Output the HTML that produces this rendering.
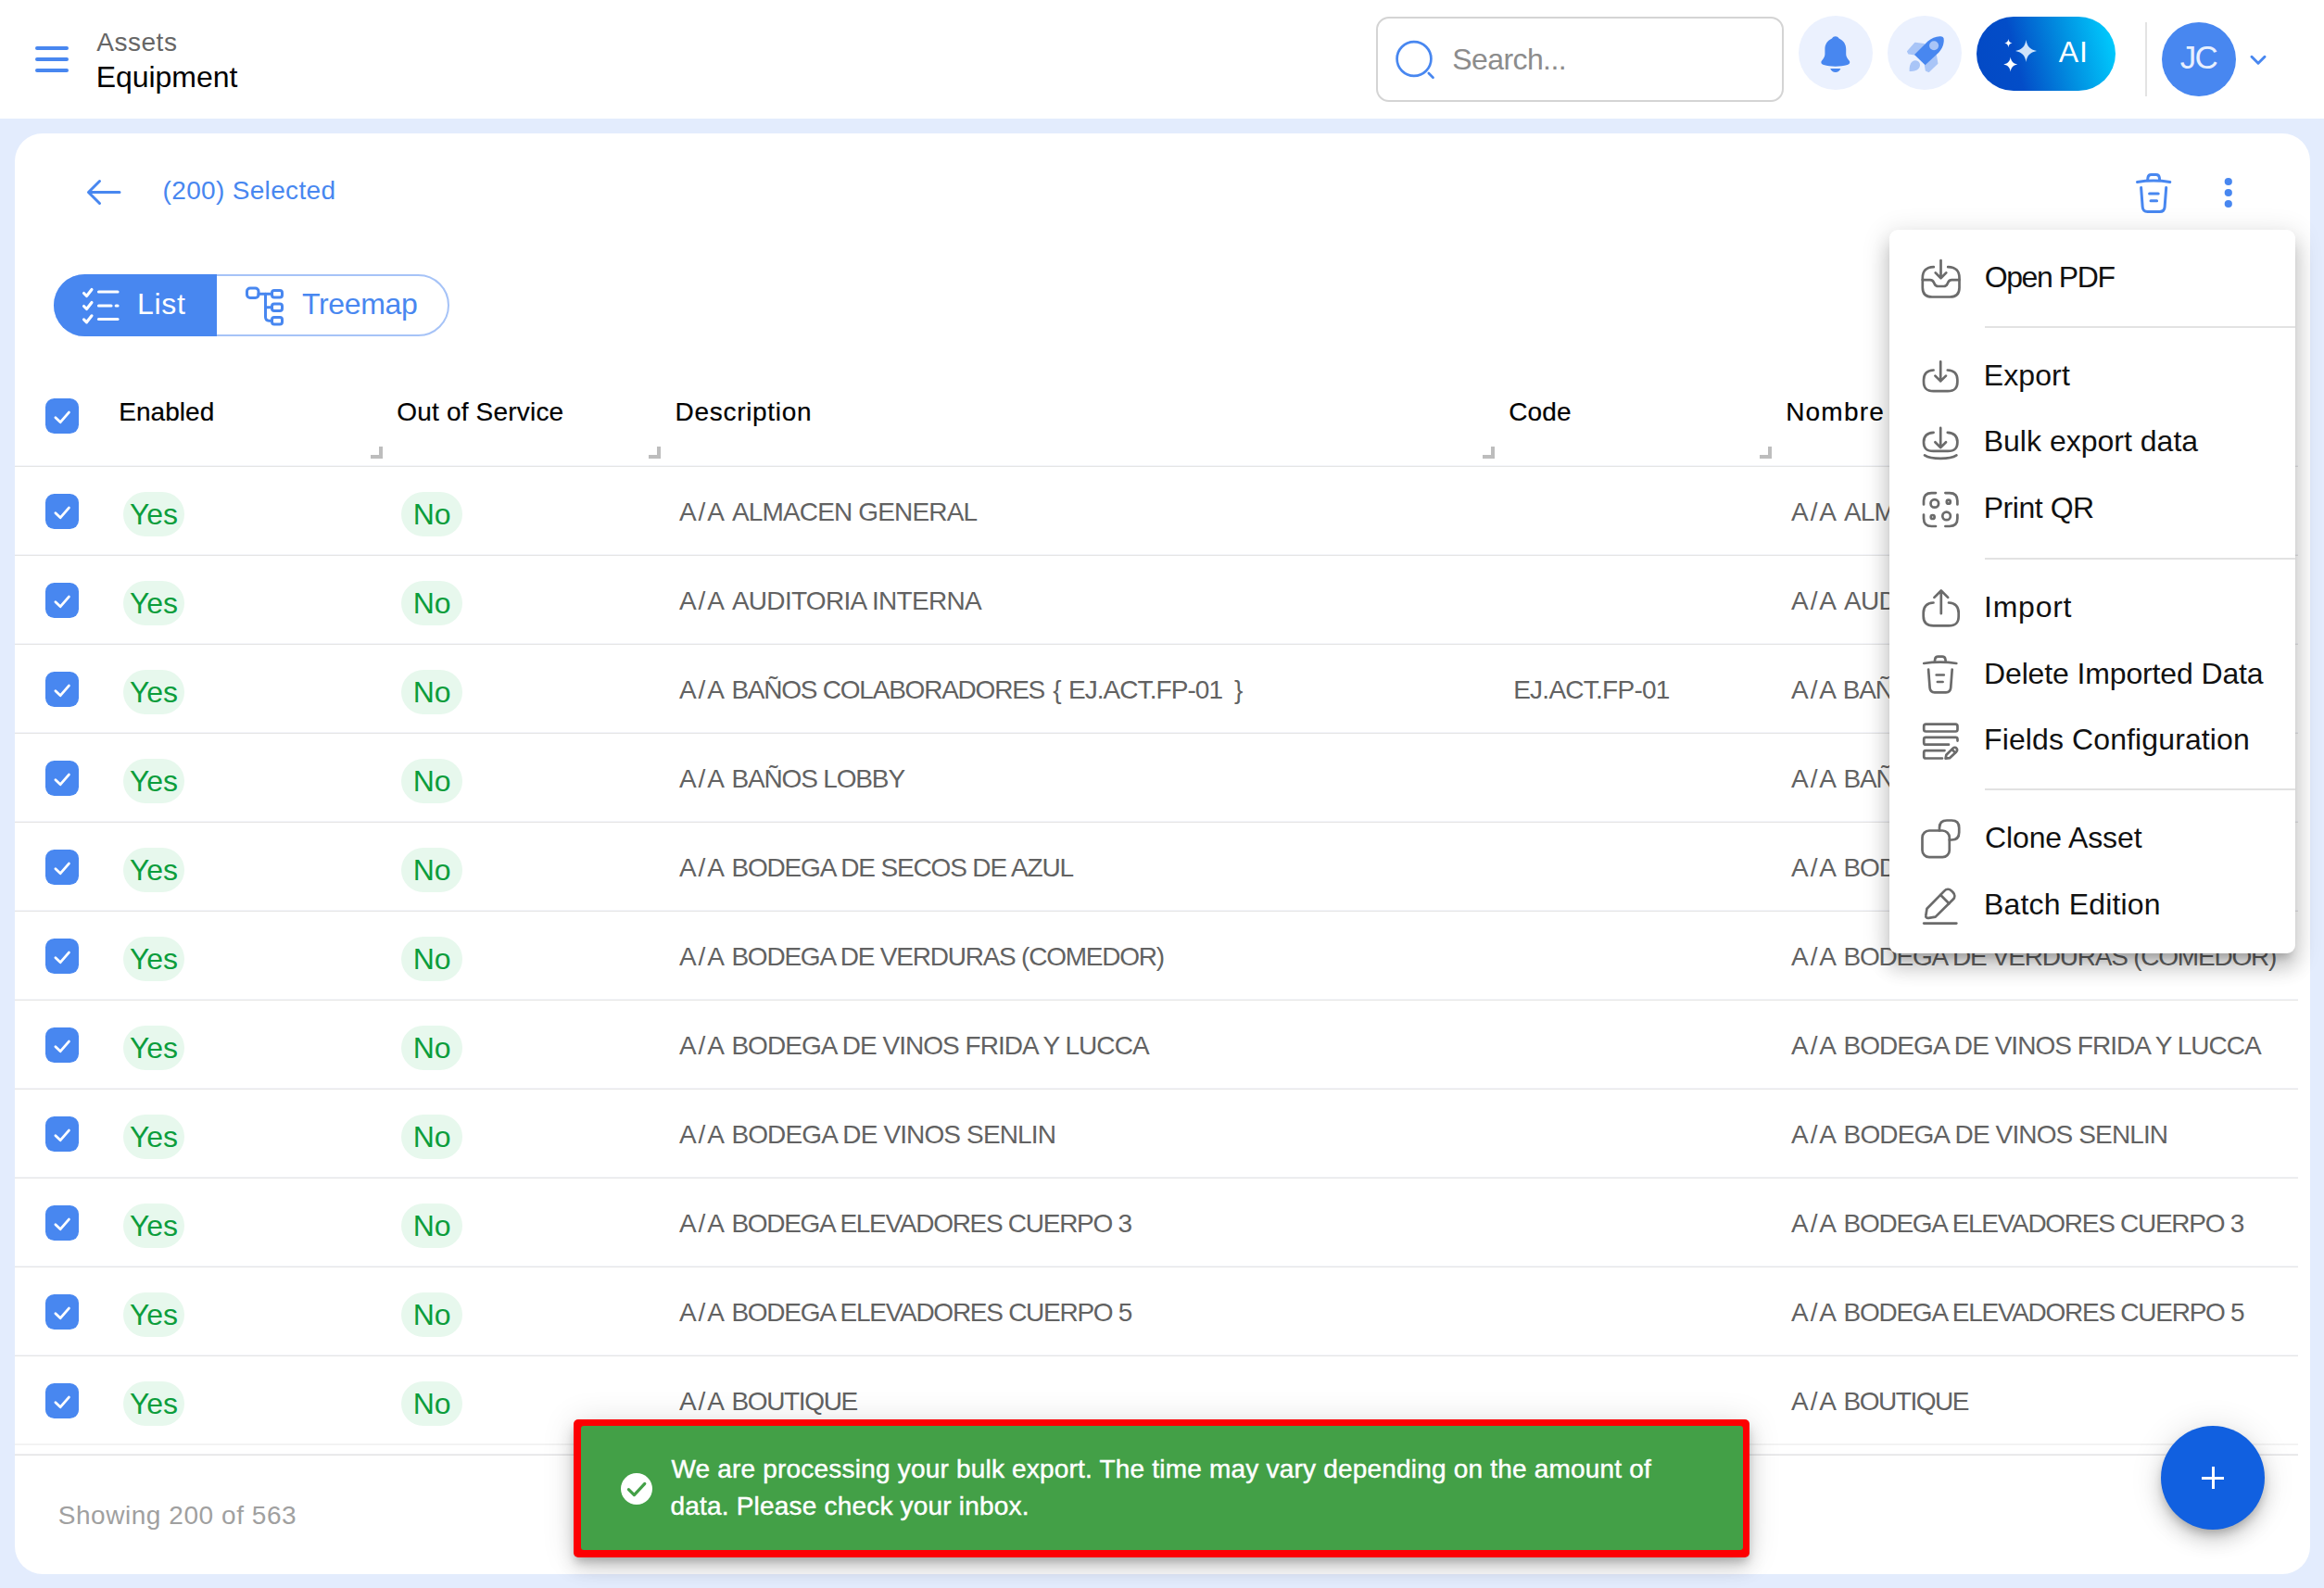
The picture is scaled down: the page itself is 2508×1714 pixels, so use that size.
<!DOCTYPE html>
<html>
<head>
<meta charset="utf-8">
<title>Equipment</title>
<style>
*{box-sizing:border-box;margin:0;padding:0}
html,body{width:2508px;height:1714px;overflow:hidden}
body{background:#e3ecfd;font-family:"Liberation Sans",sans-serif;position:relative;color:#000}
.abs{position:absolute}
.t{position:absolute;white-space:nowrap;line-height:1}
#hdr{position:absolute;left:0;top:0;width:2508px;height:128px;background:#fff}
#card{position:absolute;left:16px;top:144px;width:2477px;height:1555px;background:#fff;border-radius:30px}
.cb{position:absolute;left:49px;width:36px;height:38px;border-radius:9.5px;background:#4887f0}
.cb svg{position:absolute;left:0;top:0}
.pill{position:absolute;width:66px;height:48px;border-radius:24px;background:#e7f8ed;color:#0c9d3c;font-size:32px;line-height:48px;text-align:center}
.rowline{position:absolute;left:16px;width:2464px;height:2px;background:linear-gradient(#f4f5fa 50%,#e5e5e5 50%)}
.cell{position:absolute;white-space:nowrap;font-size:28px;color:#626262;line-height:1}
.hcell{position:absolute;white-space:nowrap;font-size:28px;color:#000;line-height:1;-webkit-text-stroke:0.18px #000}
.rh{position:absolute;width:13px;height:13px;border-right:4px solid #bdbdbd;border-bottom:4px solid #bdbdbd}
</style>
</head>
<body>
<div id="hdr"></div>
<div id="card"></div>

<!-- hamburger -->
<div class="abs" style="left:38px;top:50px;width:36px;height:4px;border-radius:2px;background:#4887f0"></div>
<div class="abs" style="left:38px;top:62px;width:36px;height:4px;border-radius:2px;background:#4887f0"></div>
<div class="abs" style="left:38px;top:74px;width:36px;height:4px;border-radius:2px;background:#4887f0"></div>
<div class="t" id="t-assets" style="left:104.30px;letter-spacing:0.515px;top:32px;font-size:28px;color:#666">Assets</div>
<div class="t" id="t-equip" style="left:103.80px;letter-spacing:-0.061px;top:67px;font-size:32px;color:#000">Equipment</div>
<!-- search -->
<div class="abs" style="left:1485px;top:18px;width:440px;height:92px;border:2px solid #d4d4d4;border-radius:14px;background:#fff"></div>
<svg class="abs" style="left:1500px;top:38px" width="56" height="56" viewBox="0 0 56 56" fill="none" stroke="#4887f0" stroke-width="2.7" stroke-linecap="round"><circle cx="26" cy="25.5" r="18.4"/><path d="M41.8 41 L46.5 45.7"/></svg>
<div class="t" id="t-search" style="left:1567.30px;letter-spacing:-0.596px;top:47.6px;font-size:32px;color:#8c8c8c">Search...</div>
<!-- bell -->
<div class="abs" style="left:1941px;top:17px;width:80px;height:80px;border-radius:40px;background:#ebf1fe"></div>
<svg class="abs" style="left:1961px;top:36px" width="40" height="46" viewBox="0 0 40 46"><path d="M19.8 3.2 C21.5 3.2 22.6 4 23.6 5.4 C28.4 7.6 31.2 11.6 31.2 17 L31.2 22.5 C31.2 25.5 33 27.5 34.6 29.4 C36 31.2 35.2 33.2 32.6 34 C28.6 35.2 24.4 35.7 19.8 35.7 C15.2 35.7 11 35.2 7 34 C4.4 33.2 3.6 31.2 5 29.4 C6.6 27.5 8.4 25.5 8.4 22.5 L8.4 17 C8.4 11.6 11.2 7.6 16 5.4 C17 4 18.1 3.2 19.8 3.2 Z" fill="#4887f0"/><path d="M14.2 38.1 L25.4 38.1 C24.2 40.6 22.4 42 19.8 42 C17.2 42 15.4 40.6 14.2 38.1 Z" fill="#4887f0"/></svg>
<!-- rocket -->
<div class="abs" style="left:2037px;top:17px;width:80px;height:80px;border-radius:40px;background:#ebf1fe"></div>
<svg class="abs" style="left:2055px;top:34px" width="48" height="48" viewBox="0 0 48 48">
<path d="M3.8 21.6 L11.8 12.6 L21.3 13.9 L11.4 24.6 L5 23.8 Z" fill="#a9c5f7" stroke="#a9c5f7" stroke-width="1.6" stroke-linejoin="round"/>
<path d="M22.6 36.2 L34.2 25.9 L35.6 34.5 L26.5 43.2 L23.6 42 Z" fill="#a9c5f7" stroke="#a9c5f7" stroke-width="1.6" stroke-linejoin="round"/>
<path d="M5.6 42.9 C5.4 38.5 6.2 34.5 8.6 32.6 C11.4 30.4 15 31.2 16.4 33.8 C17.8 36.6 16.6 39.8 13.8 41.4 C11.4 42.6 8.4 42.9 5.6 42.9 Z" fill="#a9c5f7"/>
<path d="M11 25.1 L25.5 10.6 C29.5 6.8 35.5 4.6 40.4 5.4 C41.6 5.6 42.4 6.4 42.6 7.6 C43.4 12.5 41.2 18.5 37.4 22.5 L22.6 36.2 Z" fill="#4887f0"/>
<circle cx="32.1" cy="15.2" r="5" fill="#a9c5f7"/>
</svg>
<!-- AI -->
<div class="abs" style="left:2133px;top:18px;width:150px;height:80px;border-radius:40px;background:linear-gradient(76deg,#0349c5 0%,#034dc8 30%,#0190e1 64%,#00c8fc 94%)"></div>
<svg class="abs" style="left:2158px;top:36px" width="46" height="46" viewBox="0 0 46 46">
<path d="M28.5 7 C29.6 14 32.5 17.4 40 19 C32.5 20.6 29.6 24 28.5 31 C27.4 24 24.5 20.6 17 19 C24.5 17.4 27.4 14 28.5 7 Z" fill="#cfe3fa"/>
<path d="M9.4 6 C9.8 8.8 10.8 10 13.6 10.6 C10.8 11.2 9.8 12.4 9.4 15.2 C9 12.4 8 11.2 5.2 10.6 C8 10 9 8.8 9.4 6 Z" fill="#fff"/>
<path d="M11.7 25.6 C12.4 30.4 14.2 32.4 19.2 33.6 C14.2 34.8 12.4 36.8 11.7 41.6 C11 36.8 9.2 34.8 4.2 33.6 C9.2 32.4 11 30.4 11.7 25.6 Z" fill="#fff"/>
</svg>
<div class="t" id="t-ai" style="left:2221.80px;letter-spacing:0.856px;top:40px;font-size:32px;color:#fff">AI</div>
<!-- divider -->
<div class="abs" style="left:2315px;top:24px;width:2px;height:80px;background:#e3e3e3"></div>
<!-- avatar -->
<div class="abs" style="left:2333px;top:24px;width:80px;height:80px;border-radius:40px;background:#4887f0"></div>
<div class="t" id="t-jc" style="left:2352.80px;letter-spacing:-1.900px;top:43.9px;font-size:35px;color:#e8f0fe">JC</div>
<svg class="abs" style="left:2424px;top:54px" width="26" height="20" viewBox="0 0 26 20" fill="none" stroke="#4887f0" stroke-width="3" stroke-linecap="round" stroke-linejoin="round"><path d="M6 7.3 L13 14.2 L20 7.3"/></svg>


<!-- back arrow -->
<svg class="abs" style="left:88px;top:188px" width="48" height="40" viewBox="0 0 48 40" fill="none" stroke="#4887f0" stroke-width="3" stroke-linecap="round" stroke-linejoin="round"><path d="M41 19.5 L7.5 19.5 M19.5 7.5 L7.5 19.5 L19.5 31.5"/></svg>
<div class="t" id="t-sel" style="left:175.60px;letter-spacing:0.328px;top:192px;font-size:28px;color:#4887f0">(200) Selected</div>
<!-- trash -->
<svg class="abs" style="left:2300px;top:180px" width="48" height="56" viewBox="0 0 48 56" fill="none" stroke="#4887f0" stroke-width="3" stroke-linecap="round" stroke-linejoin="round">
<path d="M6.5 16.4 C18 14.6 30 14.6 41.8 16.4"/>
<path d="M17.6 14.6 L18 11.5 C18.3 9.4 19.6 8.4 21.5 8.4 L26.8 8.4 C28.7 8.4 30 9.4 30.3 11.5 L30.7 14.6"/>
<path d="M10.6 22.4 L12.2 43.5 C12.5 47 14.2 48.4 17.5 48.4 L30.8 48.4 C34.1 48.4 35.8 47 36.1 43.5 L37.7 22.4"/>
<path d="M19.6 29 L29.2 29 M21 36.8 L27.6 36.8"/>
</svg>
<!-- dots -->
<svg class="abs" style="left:2394px;top:186px" width="22" height="44" viewBox="0 0 22 44"><circle cx="10.8" cy="10" r="4.1" fill="#4887f0"/><circle cx="10.8" cy="22" r="4.1" fill="#4887f0"/><circle cx="10.8" cy="34" r="4.1" fill="#4887f0"/></svg>
<!-- toggle -->
<div class="abs" style="left:58px;top:296px;width:427px;height:67px;border-radius:34px;border:2px solid #a6c3f7;background:#fff"></div>
<div class="abs" style="left:58px;top:296px;width:176px;height:67px;border-radius:34px 0 0 34px;background:#4887f0"></div>
<svg class="abs" style="left:84px;top:305.4px" width="50" height="48" viewBox="0 0 50 48" fill="none" stroke="#fff" stroke-width="3.1" stroke-linecap="round" stroke-linejoin="round">
<path d="M6.5 11.5 L9.5 14.5 L15 7.5"/><path d="M6.5 25.5 L9.5 28.5 L15 21.5"/><path d="M6.5 39.8 L9.5 42.8 L15 35.8"/>
<path d="M22.5 10 L43 10"/><path d="M22.5 25 L36 25"/><path d="M41.2 25 L43 25"/><path d="M22.5 39.5 L43 39.5"/>
</svg>
<div class="t" id="t-list" style="left:148.00px;letter-spacing:0.698px;top:312px;font-size:32px;color:#fff">List</div>
<svg class="abs" style="left:260px;top:304px" width="52" height="52" viewBox="0 0 52 52" fill="none" stroke="#4887f0" stroke-width="3" stroke-linecap="round" stroke-linejoin="round">
<rect x="6.5" y="7" width="12.5" height="10.5" rx="3.5"/>
<rect x="33.5" y="9.5" width="11" height="7.5" rx="2.5"/>
<rect x="33.5" y="24" width="11" height="7.5" rx="2.5"/>
<rect x="33.5" y="38.5" width="11" height="7.5" rx="2.5"/>
<path d="M19 13.2 L33.5 13.2"/>
<path d="M26.5 13.2 L26.5 38 C26.5 41 28 42.2 30.5 42.2 L33.5 42.2"/>
<path d="M26.5 27.7 L33.5 27.7"/>
</svg>
<div class="t" id="t-tree" style="left:326.00px;letter-spacing:-0.344px;top:312px;font-size:32px;color:#4887f0">Treemap</div>

<!--TABLE-START-->
<div class="cb" style="top:429.5px"><svg width="36" height="38" viewBox="0 0 36 38" fill="none" stroke="#fff" stroke-width="2.8" stroke-linecap="round" stroke-linejoin="round"><path d="M10.9 20.7 L16.2 25.7 L25.4 15.1"/></svg></div>
<div class="hcell" id="h1" style="left:128.30px;letter-spacing:0.036px;top:431px">Enabled</div>
<div class="hcell" id="h2" style="left:428.20px;letter-spacing:0.197px;top:431px">Out of Service</div>
<div class="hcell" id="h3" style="left:728.60px;letter-spacing:0.692px;top:431px">Description</div>
<div class="hcell" id="h4" style="left:1628.30px;letter-spacing:0.079px;top:431px">Code</div>
<div class="hcell" id="h5" style="left:1927.20px;letter-spacing:1.197px;top:431px">Nombre</div>
<div class="rh" style="left:400px;top:481.5px"></div>
<div class="rh" style="left:699.6px;top:481.5px"></div>
<div class="rh" style="left:1600px;top:481.5px"></div>
<div class="rh" style="left:1899.4px;top:481.5px"></div>
<div class="rowline" style="top:502px"></div>
<div class="cb" style="top:533px"><svg width="36" height="38" viewBox="0 0 36 38" fill="none" stroke="#fff" stroke-width="2.8" stroke-linecap="round" stroke-linejoin="round"><path d="M10.9 20.7 L16.2 25.7 L25.4 15.1"/></svg></div>
<div class="pill" style="left:133px;top:531px"><span id="y0">Yes</span></div>
<div class="pill" style="left:433.2px;top:531px"><span id="o0">No</span></div>
<div class="cell" id="dp0" style="left:733.00px;letter-spacing:1.872px;top:539px">A/A</div>
<div class="cell" id="d0" style="left:789.90px;letter-spacing:-0.842px;top:539px">ALMACEN GENERAL</div>
<div class="cell" id="np0" style="left:1933.10px;letter-spacing:1.872px;top:539px">A/A</div>
<div class="cell" id="n0" style="left:1990.00px;letter-spacing:-0.842px;top:539px">ALMACEN GENERAL</div>
<div class="rowline" style="top:598px"></div>
<div class="cb" style="top:629px"><svg width="36" height="38" viewBox="0 0 36 38" fill="none" stroke="#fff" stroke-width="2.8" stroke-linecap="round" stroke-linejoin="round"><path d="M10.9 20.7 L16.2 25.7 L25.4 15.1"/></svg></div>
<div class="pill" style="left:133px;top:627px"><span id="y1">Yes</span></div>
<div class="pill" style="left:433.2px;top:627px"><span id="o1">No</span></div>
<div class="cell" id="dp1" style="left:733.00px;letter-spacing:1.872px;top:635px">A/A</div>
<div class="cell" id="d1" style="left:789.90px;letter-spacing:-0.710px;top:635px">AUDITORIA INTERNA</div>
<div class="cell" id="np1" style="left:1933.10px;letter-spacing:1.872px;top:635px">A/A</div>
<div class="cell" id="n1" style="left:1990.00px;letter-spacing:-0.710px;top:635px">AUDITORIA INTERNA</div>
<div class="rowline" style="top:694px"></div>
<div class="cb" style="top:725px"><svg width="36" height="38" viewBox="0 0 36 38" fill="none" stroke="#fff" stroke-width="2.8" stroke-linecap="round" stroke-linejoin="round"><path d="M10.9 20.7 L16.2 25.7 L25.4 15.1"/></svg></div>
<div class="pill" style="left:133px;top:723px"><span id="y2">Yes</span></div>
<div class="pill" style="left:433.2px;top:723px"><span id="o2">No</span></div>
<div class="cell" id="dp2" style="left:733.00px;letter-spacing:1.872px;top:731px">A/A</div>
<div class="cell" id="d2" style="left:789.40px;letter-spacing:-1.228px;top:731px">BAÑOS COLABORADORES</div>
<div class="cell" id="d2b" style="left:1136.15px;letter-spacing:0.000px;top:731px">{</div>
<div class="cell" id="d2c" style="left:1153.00px;letter-spacing:-0.946px;top:731px">EJ.ACT.FP-01</div>
<div class="cell" id="d2d" style="left:1332.00px;letter-spacing:0.000px;top:731px">}</div>
<div class="cell" id="c2" style="left:1633.20px;letter-spacing:-0.746px;top:731px">EJ.ACT.FP-01</div>
<div class="cell" id="np2" style="left:1933.10px;letter-spacing:1.872px;top:731px">A/A</div>
<div class="cell" id="n2" style="left:1988.80px;letter-spacing:-1.206px;top:731px">BAÑOS COLABORADORES</div>
<div class="rowline" style="top:790px"></div>
<div class="cb" style="top:821px"><svg width="36" height="38" viewBox="0 0 36 38" fill="none" stroke="#fff" stroke-width="2.8" stroke-linecap="round" stroke-linejoin="round"><path d="M10.9 20.7 L16.2 25.7 L25.4 15.1"/></svg></div>
<div class="pill" style="left:133px;top:819px"><span id="y3">Yes</span></div>
<div class="pill" style="left:433.2px;top:819px"><span id="o3">No</span></div>
<div class="cell" id="dp3" style="left:733.00px;letter-spacing:1.872px;top:827px">A/A</div>
<div class="cell" id="d3" style="left:789.40px;letter-spacing:-1.151px;top:827px">BAÑOS LOBBY</div>
<div class="cell" id="np3" style="left:1933.10px;letter-spacing:1.872px;top:827px">A/A</div>
<div class="cell" id="n3" style="left:1989.50px;letter-spacing:-1.151px;top:827px">BAÑOS LOBBY</div>
<div class="rowline" style="top:886px"></div>
<div class="cb" style="top:917px"><svg width="36" height="38" viewBox="0 0 36 38" fill="none" stroke="#fff" stroke-width="2.8" stroke-linecap="round" stroke-linejoin="round"><path d="M10.9 20.7 L16.2 25.7 L25.4 15.1"/></svg></div>
<div class="pill" style="left:133px;top:915px"><span id="y4">Yes</span></div>
<div class="pill" style="left:433.2px;top:915px"><span id="o4">No</span></div>
<div class="cell" id="dp4" style="left:733.00px;letter-spacing:1.872px;top:923px">A/A</div>
<div class="cell" id="d4" style="left:789.40px;letter-spacing:-1.162px;top:923px">BODEGA DE SECOS DE AZUL</div>
<div class="cell" id="np4" style="left:1933.10px;letter-spacing:1.872px;top:923px">A/A</div>
<div class="cell" id="n4" style="left:1989.50px;letter-spacing:-1.162px;top:923px">BODEGA DE SECOS DE AZUL</div>
<div class="rowline" style="top:982px"></div>
<div class="cb" style="top:1013px"><svg width="36" height="38" viewBox="0 0 36 38" fill="none" stroke="#fff" stroke-width="2.8" stroke-linecap="round" stroke-linejoin="round"><path d="M10.9 20.7 L16.2 25.7 L25.4 15.1"/></svg></div>
<div class="pill" style="left:133px;top:1011px"><span id="y5">Yes</span></div>
<div class="pill" style="left:433.2px;top:1011px"><span id="o5">No</span></div>
<div class="cell" id="dp5" style="left:733.00px;letter-spacing:1.872px;top:1019px">A/A</div>
<div class="cell" id="d5" style="left:789.40px;letter-spacing:-1.229px;top:1019px">BODEGA DE VERDURAS (COMEDOR)</div>
<div class="cell" id="np5" style="left:1933.10px;letter-spacing:1.872px;top:1019px">A/A</div>
<div class="cell" id="n5" style="left:1989.50px;letter-spacing:-1.229px;top:1019px">BODEGA DE VERDURAS (COMEDOR)</div>
<div class="rowline" style="top:1078px"></div>
<div class="cb" style="top:1109px"><svg width="36" height="38" viewBox="0 0 36 38" fill="none" stroke="#fff" stroke-width="2.8" stroke-linecap="round" stroke-linejoin="round"><path d="M10.9 20.7 L16.2 25.7 L25.4 15.1"/></svg></div>
<div class="pill" style="left:133px;top:1107px"><span id="y6">Yes</span></div>
<div class="pill" style="left:433.2px;top:1107px"><span id="o6">No</span></div>
<div class="cell" id="dp6" style="left:733.00px;letter-spacing:1.872px;top:1115px">A/A</div>
<div class="cell" id="d6" style="left:789.40px;letter-spacing:-0.966px;top:1115px">BODEGA DE VINOS FRIDA Y LUCCA</div>
<div class="cell" id="np6" style="left:1933.10px;letter-spacing:1.872px;top:1115px">A/A</div>
<div class="cell" id="n6" style="left:1989.60px;letter-spacing:-0.966px;top:1115px">BODEGA DE VINOS FRIDA Y LUCCA</div>
<div class="rowline" style="top:1174px"></div>
<div class="cb" style="top:1205px"><svg width="36" height="38" viewBox="0 0 36 38" fill="none" stroke="#fff" stroke-width="2.8" stroke-linecap="round" stroke-linejoin="round"><path d="M10.9 20.7 L16.2 25.7 L25.4 15.1"/></svg></div>
<div class="pill" style="left:133px;top:1203px"><span id="y7">Yes</span></div>
<div class="pill" style="left:433.2px;top:1203px"><span id="o7">No</span></div>
<div class="cell" id="dp7" style="left:733.00px;letter-spacing:1.872px;top:1211px">A/A</div>
<div class="cell" id="d7" style="left:789.40px;letter-spacing:-0.871px;top:1211px">BODEGA DE VINOS SENLIN</div>
<div class="cell" id="np7" style="left:1933.10px;letter-spacing:1.872px;top:1211px">A/A</div>
<div class="cell" id="n7" style="left:1989.60px;letter-spacing:-0.871px;top:1211px">BODEGA DE VINOS SENLIN</div>
<div class="rowline" style="top:1270px"></div>
<div class="cb" style="top:1301px"><svg width="36" height="38" viewBox="0 0 36 38" fill="none" stroke="#fff" stroke-width="2.8" stroke-linecap="round" stroke-linejoin="round"><path d="M10.9 20.7 L16.2 25.7 L25.4 15.1"/></svg></div>
<div class="pill" style="left:133px;top:1299px"><span id="y8">Yes</span></div>
<div class="pill" style="left:433.2px;top:1299px"><span id="o8">No</span></div>
<div class="cell" id="dp8" style="left:733.00px;letter-spacing:1.872px;top:1307px">A/A</div>
<div class="cell" id="d8" style="left:789.40px;letter-spacing:-1.284px;top:1307px">BODEGA ELEVADORES CUERPO 3</div>
<div class="cell" id="np8" style="left:1933.10px;letter-spacing:1.872px;top:1307px">A/A</div>
<div class="cell" id="n8" style="left:1989.60px;letter-spacing:-1.284px;top:1307px">BODEGA ELEVADORES CUERPO 3</div>
<div class="rowline" style="top:1366px"></div>
<div class="cb" style="top:1397px"><svg width="36" height="38" viewBox="0 0 36 38" fill="none" stroke="#fff" stroke-width="2.8" stroke-linecap="round" stroke-linejoin="round"><path d="M10.9 20.7 L16.2 25.7 L25.4 15.1"/></svg></div>
<div class="pill" style="left:133px;top:1395px"><span id="y9">Yes</span></div>
<div class="pill" style="left:433.2px;top:1395px"><span id="o9">No</span></div>
<div class="cell" id="dp9" style="left:733.00px;letter-spacing:1.872px;top:1403px">A/A</div>
<div class="cell" id="d9" style="left:789.40px;letter-spacing:-1.268px;top:1403px">BODEGA ELEVADORES CUERPO 5</div>
<div class="cell" id="np9" style="left:1933.10px;letter-spacing:1.872px;top:1403px">A/A</div>
<div class="cell" id="n9" style="left:1989.60px;letter-spacing:-1.268px;top:1403px">BODEGA ELEVADORES CUERPO 5</div>
<div class="rowline" style="top:1462px"></div>
<div class="cb" style="top:1493px"><svg width="36" height="38" viewBox="0 0 36 38" fill="none" stroke="#fff" stroke-width="2.8" stroke-linecap="round" stroke-linejoin="round"><path d="M10.9 20.7 L16.2 25.7 L25.4 15.1"/></svg></div>
<div class="pill" style="left:133px;top:1491px"><span id="y10">Yes</span></div>
<div class="pill" style="left:433.2px;top:1491px"><span id="o10">No</span></div>
<div class="cell" id="dp10" style="left:733.00px;letter-spacing:1.872px;top:1499px">A/A</div>
<div class="cell" id="d10" style="left:789.40px;letter-spacing:-1.337px;top:1499px">BOUTIQUE</div>
<div class="cell" id="np10" style="left:1933.10px;letter-spacing:1.872px;top:1499px">A/A</div>
<div class="cell" id="n10" style="left:1989.60px;letter-spacing:-1.480px;top:1499px">BOUTIQUE</div>
<div class="rowline" style="top:1558px;background:#f3f3f3"></div>
<div class="rowline" style="top:1569px;background:linear-gradient(#f1f1f4 50%,#e2e2e2 50%)"></div>
<div class="t" id="t-show" style="left:62.70px;letter-spacing:0.555px;top:1622.4px;font-size:28px;color:#a0a0a0">Showing 200 of 563</div>
<div class="abs" style="left:2332px;top:1539px;width:112px;height:112px;border-radius:56px;background:#1160e0;box-shadow:0 6px 10px -2px rgba(0,0,0,.2),0 12px 20px 0 rgba(0,0,0,.14),0 2px 36px 0 rgba(0,0,0,.12)"></div>
<div class="abs" style="left:2376px;top:1593.5px;width:24px;height:3px;background:#fff"></div><div class="abs" style="left:2386.5px;top:1583px;width:3px;height:24px;background:#fff"></div>
<!--TABLE-END-->
<!--MENU-START-->
<div class="abs" id="menu" style="left:2039px;top:248px;width:438px;height:781px;border-radius:9px;background:#fff;box-shadow:0 10px 10px -6px rgba(0,0,0,.2),0 16px 20px 2px rgba(0,0,0,.14),0 6px 28px 4px rgba(0,0,0,.12)"></div>
<div class="abs" style="left:2066px;top:271px;width:56px;height:56px"><svg width="56" height="56" viewBox="0 0 56 56" fill="none" stroke="#6b6b6b" stroke-width="2.7" stroke-linecap="round" stroke-linejoin="round"><path d="M28.5 10 L28.5 29.2 M22.7 23.4 L28.5 29.2 L34.3 23.4"/><path d="M20.8 17.2 C12 17.6 8.8 21.5 8.8 29 L8.8 39.5 C8.8 46.5 12 49.5 19 49.5 L38.3 49.5 C45.3 49.5 48.5 46.5 48.5 39.5 L48.5 29 C48.5 21.5 45.3 17.6 36.2 17.2"/><path d="M8.8 31.1 L17 31.1 C19 31.1 20 32 20.8 33.6 L21.8 35.6 C22.6 37.2 23.6 38 25.6 38 L31.6 38 C33.6 38 34.6 37.2 35.4 35.6 L36.4 33.6 C37.2 32 38.2 31.1 40.2 31.1 L48.5 31.1"/></svg></div>
<div class="t mi" id="m0" style="left:2141.70px;letter-spacing:-1.403px;top:282.9px;font-size:32px;color:#111">Open PDF</div>
<div class="abs" style="left:2066px;top:377px;width:56px;height:56px"><svg width="56" height="56" viewBox="0 0 56 56" fill="none" stroke="#6b6b6b" stroke-width="2.7" stroke-linecap="round" stroke-linejoin="round"><path d="M28.2 13.3 L28.2 34.4 M22.4 28.6 L28.2 34.4 L34 28.6"/><path d="M20.6 22.5 C13 23 10 26.5 10 33 L10 35 C10 42 13 45.1 20.5 45.1 L36 45.1 C43.4 45.1 46.4 42 46.4 35 L46.4 33 C46.4 26.5 43.4 23 35.8 22.5"/></svg></div>
<div class="t mi" id="m1" style="left:2140.70px;letter-spacing:0.121px;top:388.9px;font-size:32px;color:#111">Export</div>
<div class="abs" style="left:2066px;top:449px;width:56px;height:56px"><svg width="56" height="56" viewBox="0 0 56 56" fill="none" stroke="#6b6b6b" stroke-width="2.7" stroke-linecap="round" stroke-linejoin="round"><path d="M28.2 12.9 L28.2 34.1 M22.4 28.3 L28.2 34.1 L34 28.3"/><path d="M20.6 17.8 C13 18.3 10 21.8 10 28 L10 28.5 C10 35 13 37.9 20.5 37.9 L36 37.9 C43.4 37.9 46.4 35 46.4 28.5 L46.4 28 C46.4 21.8 43.4 18.3 35.8 17.8"/><path d="M11 42.4 C15 45 21 45.9 28.2 45.9 C35.4 45.9 41.4 45 45.4 42.4"/></svg></div>
<div class="t mi" id="m2" style="left:2140.70px;letter-spacing:0.010px;top:460.3px;font-size:32px;color:#111">Bulk export data</div>
<div class="abs" style="left:2066px;top:521px;width:56px;height:56px"><svg width="56" height="56" viewBox="0 0 56 56" fill="none" stroke="#6b6b6b" stroke-width="2.7" stroke-linecap="round" stroke-linejoin="round"><path d="M10 23.5 L10 19.5 C10 14 12.8 11.1 18.5 11.1 L23 11.1"/><path d="M33.4 11.1 L37.9 11.1 C43.6 11.1 46.4 14 46.4 19.5 L46.4 23.5"/><path d="M46.4 34.6 L46.4 38.6 C46.4 44.1 43.6 47 37.9 47 L33.4 47"/><path d="M23 47 L18.5 47 C12.8 47 10 44.1 10 38.6 L10 34.6"/><circle cx="21.8" cy="22.4" r="4.3"/><circle cx="36.8" cy="20.7" r="2"/><circle cx="19.7" cy="37" r="2"/><circle cx="34.6" cy="35.9" r="4.3"/></svg></div>
<div class="t mi" id="m3" style="left:2140.70px;letter-spacing:-0.454px;top:532.1px;font-size:32px;color:#111">Print QR</div>
<div class="abs" style="left:2066px;top:627px;width:56px;height:56px"><svg width="56" height="56" viewBox="0 0 56 56" fill="none" stroke="#6b6b6b" stroke-width="2.7" stroke-linecap="round" stroke-linejoin="round"><path d="M28.8 35.2 L28.8 10.5 M21.4 17.9 L28.8 10.5 L36.2 17.9"/><path d="M20.5 23.5 C13 24 9.7 27.6 9.7 34.5 L9.7 38 C9.7 45.2 13 48.4 20.5 48.4 L37 48.4 C44.5 48.4 47.7 45.2 47.7 38 L47.7 34.5 C47.7 27.6 44.5 24 37 23.5"/></svg></div>
<div class="t mi" id="m4" style="left:2141.00px;letter-spacing:0.761px;top:638.9px;font-size:32px;color:#111">Import</div>
<div class="abs" style="left:2066px;top:699px;width:56px;height:56px"><svg width="56" height="56" viewBox="0 0 56 56" fill="none" stroke="#6b6b6b" stroke-width="2.7" stroke-linecap="round" stroke-linejoin="round"><path d="M10.2 17 C22 15.2 33.5 15.2 45.3 17"/><path d="M21.8 15.4 L22.2 12.6 C22.5 10.4 23.8 9.6 25.6 9.6 L30 9.6 C31.8 9.6 33.1 10.4 33.4 12.6 L33.8 15.4"/><path d="M15.1 23.5 L16.6 43.4 C16.9 47 18.6 48.3 21.8 48.3 L34 48.3 C37.2 48.3 38.9 47 39.2 43.4 L40.7 23.5"/><path d="M23.7 29.5 L31.8 29.5 M24.9 37 L30.6 37"/></svg></div>
<div class="t mi" id="m5" style="left:2141.00px;letter-spacing:-0.135px;top:710.5px;font-size:32px;color:#111">Delete Imported Data</div>
<div class="abs" style="left:2066px;top:771px;width:56px;height:56px"><svg width="56" height="56" viewBox="0 0 56 56" fill="none" stroke="#6b6b6b" stroke-width="2.7" stroke-linecap="round" stroke-linejoin="round"><rect x="10.2" y="10.7" width="36.3" height="7.8" rx="2.2"/><path d="M37 32.7 L12.2 32.7 Q10.2 32.7 10.2 30.7 L10.2 26.9 Q10.2 24.9 12.2 24.9 L44.5 24.9 Q46.5 24.9 46.5 26.9 L46.5 28.6"/><path d="M30 47.5 L12.2 47.5 Q10.2 47.5 10.2 45.5 L10.2 41.1 Q10.2 39.1 12.2 39.1 L32.5 39.1"/><path d="M33.6 47.6 L34.4 43.8 L41.6 36.6 C42.8 35.4 44.6 35.6 45.4 36.6 C46.4 37.6 46.4 39.2 45.2 40.4 L38 47.2 Z"/><path d="M40.6 38 L44 41.4"/></svg></div>
<div class="t mi" id="m6" style="left:2141.00px;letter-spacing:0.116px;top:782.3px;font-size:32px;color:#111">Fields Configuration</div>
<div class="abs" style="left:2066px;top:877px;width:56px;height:56px"><svg width="56" height="56" viewBox="0 0 56 56" fill="none" stroke="#6b6b6b" stroke-width="2.7" stroke-linecap="round" stroke-linejoin="round"><rect x="8.5" y="19.5" width="29.3" height="28.7" rx="7.5"/><path d="M27 19.5 L27 16.5 C27 11 29.5 8.5 35 8.5 L40.2 8.5 C45.7 8.5 48.2 11 48.2 16.5 L48.2 21.5 C48.2 27 45.7 29.5 40.2 29.5 L37.8 29.5"/></svg></div>
<div class="t mi" id="m7" style="left:2142.00px;letter-spacing:-0.124px;top:887.7px;font-size:32px;color:#111">Clone Asset</div>
<div class="abs" style="left:2066px;top:950px;width:56px;height:56px"><svg width="56" height="56" viewBox="0 0 56 56" fill="none" stroke="#6b6b6b" stroke-width="2.7" stroke-linecap="round" stroke-linejoin="round"><path d="M12.3 38.2 L13.5 30.8 L32.3 11.6 C34.5 9.4 37.7 9.4 39.9 11.4 L41.7 13.2 C43.9 15.4 43.9 18.6 41.7 20.8 L22.7 39.6 L15.3 40.8 C13.3 41.2 11.9 40 12.3 38.2 Z"/><path d="M28.2 16 L37.4 25.2"/><path d="M10.2 46.6 L45.3 46.6"/></svg></div>
<div class="t mi" id="m8" style="left:2141.00px;letter-spacing:0.170px;top:959.6px;font-size:32px;color:#111">Batch Edition</div>
<div class="abs" style="left:2142px;top:352px;width:335px;height:2px;background:#e2e2e2"></div>
<div class="abs" style="left:2142px;top:602px;width:335px;height:2px;background:#e2e2e2"></div>
<div class="abs" style="left:2142px;top:851px;width:335px;height:2px;background:#e2e2e2"></div>
<!--MENU-END-->
<div class="abs" style="left:619px;top:1532px;width:1269px;height:149px;border-radius:5px;background:#fd0002;box-shadow:0 6px 10px -2px rgba(0,0,0,.2),0 12px 20px 0 rgba(0,0,0,.14),0 2px 36px 0 rgba(0,0,0,.12)"></div>
<div class="abs" style="left:627px;top:1539px;width:1254px;height:134px;border-radius:3px;background:#43a047"></div>
<svg class="abs" style="left:668px;top:1588px" width="38" height="38" viewBox="0 0 38 38"><circle cx="19" cy="19" r="17" fill="#fff"/><path d="M10.4 19.6 L16.4 25.6 L27.8 13.4" fill="none" stroke="#43a047" stroke-width="3.2" stroke-linecap="round" stroke-linejoin="round"/></svg>
<div class="t ts" id="toast1" style="left:724.40px;letter-spacing:0.199px;top:1572.3px;font-size:28px;color:#fff;-webkit-text-stroke:0.45px #fff">We are processing your bulk export. The time may vary depending on the amount of</div>
<div class="t ts" id="toast2" style="left:723.40px;letter-spacing:0.202px;top:1612.2px;font-size:28px;color:#fff;-webkit-text-stroke:0.45px #fff">data. Please check your inbox.</div>

</body>
</html>
